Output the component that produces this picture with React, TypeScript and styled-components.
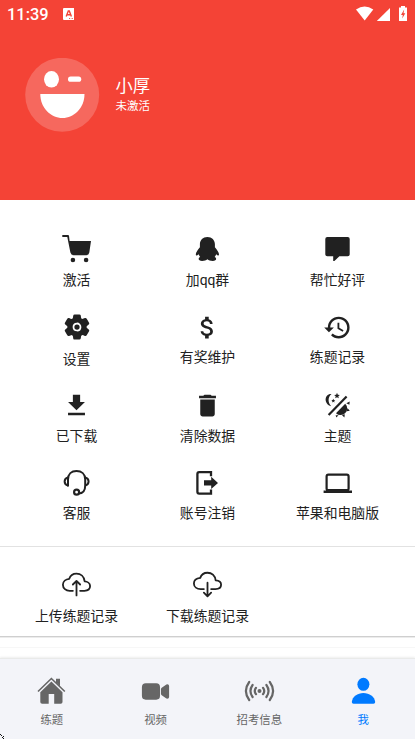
import React from 'react';
import styled, { createGlobalStyle } from 'styled-components';
import { MdAttachMoney, MdDelete, MdGetApp, MdHistory } from 'react-icons/md';
import {
  IoCloudDownloadOutline,
  IoCloudUploadOutline,
  IoSettings,
  IoVideocam,
} from 'react-icons/io5';

const GlobalStyle = createGlobalStyle`
  html, body { margin: 0; padding: 0; background: #fff; }
  * { box-sizing: border-box; }
  svg { display: block; }
`;

const Screen = styled.div`
  width: 415px;
  height: 739px;
  display: flex;
  flex-direction: column;
  position: relative;
  overflow: hidden;
  background: #fff;
  color: #212121;
  font-family: Roboto, 'Noto Sans CJK SC', sans-serif;
`;

const Header = styled.header`
  height: 200px;
  flex: none;
  background: #f44336;
  color: #fff;
`;

const StatusBar = styled.div`
  height: 28px;
  display: flex;
  align-items: center;
  justify-content: space-between;
  padding: 0 7px;
`;

const StatusLeft = styled.div`
  display: flex;
  align-items: center;
  gap: 15px;
`;

const Clock = styled.span`
  width: 41px;
  padding-top: 1px;
  font-size: 16.4px;
  line-height: 28px;
  font-weight: 500;
`;

const Profile = styled.div`
  display: flex;
  align-items: center;
  gap: 15.5px;
  padding: 30px 0 0 25px;
`;

const ProfileText = styled.div`
  display: flex;
  flex-direction: column;
  padding-bottom: 1px;
`;

const UserName = styled.span`
  font-size: 17.3px;
  line-height: 22px;
`;

const UserState = styled.span`
  font-size: 11.5px;
  line-height: 18px;
`;

const Grid = styled.section<{ $top: number; $height: number }>`
  flex: none;
  height: ${(p) => p.$height}px;
  display: grid;
  grid-template-columns: 131px 131px 129px;
  grid-auto-rows: 78px;
  padding: ${(p) => p.$top}px 0 0 11px;
`;

const Cell = styled.div`
  display: flex;
  flex-direction: column;
  align-items: center;
`;

const IconBox = styled.div`
  width: 33px;
  height: 32px;
  display: flex;
  align-items: center;
  justify-content: center;
`;

const Label = styled.span<{ $gap: number }>`
  margin-top: ${(p) => p.$gap}px;
  font-size: 13.85px;
  line-height: 20px;
  white-space: nowrap;
`;

const Divider = styled.div`
  flex: none;
  height: 1px;
  background: #e2e2e2;
`;

const CardEdge = styled.div`
  flex: none;
  height: 12px;
  border-top: 1px solid #cfcfcf;
  border-bottom: 1px solid #f7f7f7;
  box-shadow: inset 0 1px 0 #ececec;
`;

const TabBar = styled.nav`
  height: 81px;
  margin-top: auto;
  flex: none;
  display: grid;
  grid-template-columns: repeat(4, 1fr);
  background: #f3f4f9;
  border-top: 1px solid #e9eae9;
  box-shadow: 0 -1px 2px rgba(0, 0, 0, 0.07);
`;

const Tab = styled.div<{ $active?: boolean }>`
  display: flex;
  flex-direction: column;
  align-items: center;
  padding-top: 16px;
  color: ${(p) => (p.$active ? '#007aff' : '#666')};
`;

const TabLabel = styled.span`
  margin-top: 5px;
  font-size: 11.4px;
  line-height: 16px;
`;

const Pointer = styled.svg`
  position: absolute;
  left: 0;
  bottom: 0;
`;

const Glyph = ({ children }: { children: React.ReactNode }) => (
  <svg width="33" height="32" viewBox="0 0 33 32" fill="currentColor">
    {children}
  </svg>
);

const Cart = () => (
  <Glyph>
    <path d="M2.3 2H8q.8 0 1 .8L9.600 8H31L29.300 19.600Q28.900 22.200 26.300 22.200H13.600Q11 22.200 10.400 19.600L7.300 4H2.300Z" />
    <circle cx="12.900" cy="27" r="2.300" />
    <circle cx="26.100" cy="27" r="2.300" />
  </Glyph>
);

const Penguin = () => (
  <Glyph>
    <path d="M16.400 4C20.900 4 23.900 7.100 23.900 11.300V14.200C25.800 16.500 28 19.300 28 21.300C28 22.800 27.100 23 25.100 21.300C24.900 22.500 24.300 23.300 23.600 24.100C26 25.100 25.700 27.900 21.700 27.900C19.300 27.900 17.700 27.300 16.400 26.300C15.100 27.300 13.500 27.900 11.100 27.900C7.100 27.900 6.800 25.100 9.200 24.100C8.500 23.300 7.900 22.500 7.700 21.300C5.700 23 4.800 22.800 4.800 21.300C4.800 19.300 7 16.500 8.900 14.200V11.300C8.900 7.100 11.900 4 16.400 4Z" />
  </Glyph>
);

const Comment = () => (
  <Glyph>
    <path d="M6.300 4H26.700Q28.700 4 28.700 6V21.200Q28.700 23.200 26.700 23.200H18.400L13.400 28H12.200V23.200H6.300Q4.300 23.200 4.300 21.200V6Q4.300 4 6.300 4Z" />
  </Glyph>
);

const Headset = () => (
  <Glyph>
    <g fill="none" stroke="currentColor" strokeWidth="2">
      <path d="M8 19.500V12.400C8 7 11.500 4 16.500 4S25.200 7 25.200 12.400V18.500C25.200 23.500 23 26.500 18.500 26.600" />
      <path d="M8 10.500C3.500 11.500 3.500 17.500 8 18.500M25.200 10.500C29.700 11.500 29.700 17.500 25.200 18.500" />
      <circle cx="16.600" cy="25.200" r="2.500" strokeWidth="2.200" />
    </g>
  </Glyph>
);

const Logout = () => (
  <Glyph>
    <path
      d="M20 9.300V5.200H8.200Q6.400 5.200 6.400 7V24.800Q6.400 26.600 8.200 26.600H20V22.500"
      fill="none"
      stroke="currentColor"
      strokeWidth="2.300"
    />
    <path d="M13 13.200H20.200V9.700L27 15.900L20.200 22.100V18.600H13Z" />
  </Glyph>
);

const Theme = () => (
  <Glyph>
    <path d="M10.500 5.100C3 4.600 2.500 15.600 10.200 17.200C6.800 14.200 6.600 8 10.500 5.100Z" />
    <path d="M16 3.800L16.800 5.800L18.900 6L17.300 7.300L17.800 9.300L16 8.200L14.200 9.300L14.700 7.300L13.100 6L15.200 5.800ZM12.300 9.700L12.900 11L14.300 11.200L13.200 12.100L13.500 13.500L12.300 12.700L11.100 13.500L11.400 12.100L10.300 11.200L11.700 11Z" />
    <path d="M7.600 26L25.600 7.400" stroke="currentColor" strokeWidth="2.200" />
    <path d="M15 24.200L24.200 14.700A6.500 6.500 0 0 1 15 24.200Z" />
    <path d="M25.300 14.300L28.700 12.600L28.400 15.800ZM26.500 19.200L28.800 21.800L25.600 22.300ZM20.900 26.100L23.800 25.300L23.400 28.400ZM14.600 26.200L17.500 26.300L15.400 28.600Z" />
  </Glyph>
);

const Laptop = () => (
  <Glyph>
    <rect x="5.600" y="7.700" width="22" height="15.500" rx="1.800" fill="none" stroke="currentColor" strokeWidth="2.200" />
    <path d="M2.600 23.500H31V26H2.600ZM5 22.200H28V24H5Z" />
  </Glyph>
);

const Home = () => (
  <Glyph>
    <path d="M3 16.500L16.400 3.500L29.800 16.500" fill="none" stroke="currentColor" strokeWidth="1.600" />
    <path d="M21 3.700H25V11.500L21 7.500Z" />
    <path d="M16.400 6.600L27.500 17.300V27Q27.500 28.800 25.700 28.800H19.200V19H13.700V28.800H7.200Q5.300 28.800 5.300 27V17.300Z" />
  </Glyph>
);

const Broadcast = () => (
  <Glyph>
    <circle cx="16.500" cy="16" r="2" />
    <g fill="none" stroke="currentColor" strokeWidth="2.200" strokeLinecap="round">
      <path d="M13 12.800Q10.500 16 13 19.200M20 12.800Q22.500 16 20 19.200" />
      <path d="M9.600 10Q5.300 16 9.600 22M23.400 10Q27.700 16 23.400 22" />
      <path d="M6.200 7Q-.4 16 6.200 25M26.800 7Q33.400 16 26.800 25" />
    </g>
  </Glyph>
);

const Person = () => (
  <Glyph>
    <ellipse cx="16.400" cy="9.300" rx="6" ry="6.500" />
    <path d="M4.800 27C5.300 21.500 10.500 17.900 16.400 17.900S27.700 21.500 28.200 27Q28.200 28.800 26.500 28.800H6.500Q4.800 28.800 4.800 27Z" />
  </Glyph>
);

const Avatar = () => (
  <svg width="75" height="75" viewBox="0 0 75 75" fill="#fff">
    <circle cx="37.200" cy="36.800" r="37" opacity=".2" />
    <ellipse cx="26.500" cy="21.300" rx="7.500" ry="8.300" />
    <rect x="43" y="18.600" width="13.200" height="5.200" rx="2.600" />
    <path d="M15.300 36H59.500C59.500 50 49 60 37.400 60S15.300 50 15.300 36Z" />
  </svg>
);

const InputBadge = () => (
  <svg width="12" height="12" viewBox="0 0 12 12">
    <path d="M1 0H11V12H1Q0 12 0 11V1Q0 0 1 0Z" fill="#fff" />
    <path d="M3.200 8.400L5.300 3H6.300L8.400 8.400M4.200 6.800H7.400" fill="none" stroke="#f44336" strokeWidth="1.400" />
    <path d="M6 10.500H7.200M8.600 10.500H9.800" stroke="#f44336" strokeWidth=".9" />
  </svg>
);

const StatusIcons = () => (
  <svg width="52" height="16" viewBox="0 0 52 16" fill="#fff">
    <path d="M0 3.600Q8.600-2.800 17.300 3.600L8.700 14.500Z" />
    <path d="M20.800 15L34 2V15Z" />
    <path d="M45 0H49V1.500H51V15H43V1.500H45Z" />
    <path d="M48.200 3.500L45 9H46.800L46.200 12.500L49.300 7.300H47.500Z" fill="#f44336" />
  </svg>
);

type Entry = { label: string; icon: React.ReactNode; gap: number };

const actions: Entry[] = [
  { label: '激活', icon: <Cart />, gap: 5 },
  { label: '加qq群', icon: <Penguin />, gap: 5 },
  { label: '帮忙好评', icon: <Comment />, gap: 5 },
  { label: '设置', icon: <IoSettings size={28} />, gap: 6 },
  { label: '有奖维护', icon: <MdAttachMoney size={29} />, gap: 4 },
  { label: '练题记录', icon: <MdHistory size={29} />, gap: 4 },
  { label: '已下载', icon: <MdGetApp size={29} />, gap: 5 },
  { label: '清除数据', icon: <MdDelete size={29} />, gap: 5 },
  { label: '主题', icon: <Theme />, gap: 5 },
  { label: '客服', icon: <Headset />, gap: 4 },
  { label: '账号注销', icon: <Logout />, gap: 4 },
  { label: '苹果和电脑版', icon: <Laptop />, gap: 4 },
];

const syncActions: Entry[] = [
  { label: '上传练题记录', icon: <IoCloudUploadOutline size={29} />, gap: 6 },
  { label: '下载练题记录', icon: <IoCloudDownloadOutline size={29} />, gap: 6 },
];

const tabs = [
  { label: '练题', icon: <Home /> },
  { label: '视频', icon: <IoVideocam size={29} /> },
  { label: '招考信息', icon: <Broadcast /> },
  { label: '我', icon: <Person />, active: true },
];

const ActionGrid = ({ items, top, height }: { items: Entry[]; top: number; height: number }) => (
  <Grid $top={top} $height={height}>
    {items.map((item) => (
      <Cell key={item.label}>
        <IconBox>{item.icon}</IconBox>
        <Label $gap={item.gap}>{item.label}</Label>
      </Cell>
    ))}
  </Grid>
);

export default function App() {
  return (
    <Screen lang="zh-CN">
      <GlobalStyle />
      <Header>
        <StatusBar>
          <StatusLeft>
            <Clock>11:39</Clock>
            <InputBadge />
          </StatusLeft>
          <StatusIcons />
        </StatusBar>
        <Profile>
          <Avatar />
          <ProfileText>
            <UserName>小厚</UserName>
            <UserState>未激活</UserState>
          </ProfileText>
        </Profile>
      </Header>
      <ActionGrid items={actions} top={33} height={346} />
      <Divider />
      <ActionGrid items={syncActions} top={21} height={89} />
      <CardEdge />
      <TabBar>
        {tabs.map((tab) => (
          <Tab key={tab.label} $active={tab.active}>
            <IconBox>{tab.icon}</IconBox>
            <TabLabel>{tab.label}</TabLabel>
          </Tab>
        ))}
      </TabBar>
      <Pointer width="5" height="5" viewBox="0 0 5 5">
        <path d="M0 0H1V1H0ZM1 1H2V2H1ZM2 3H3V4H2ZM3 2H4V3H3ZM3 4H4V5H3Z" fill="#111" />
      </Pointer>
    </Screen>
  );
}
